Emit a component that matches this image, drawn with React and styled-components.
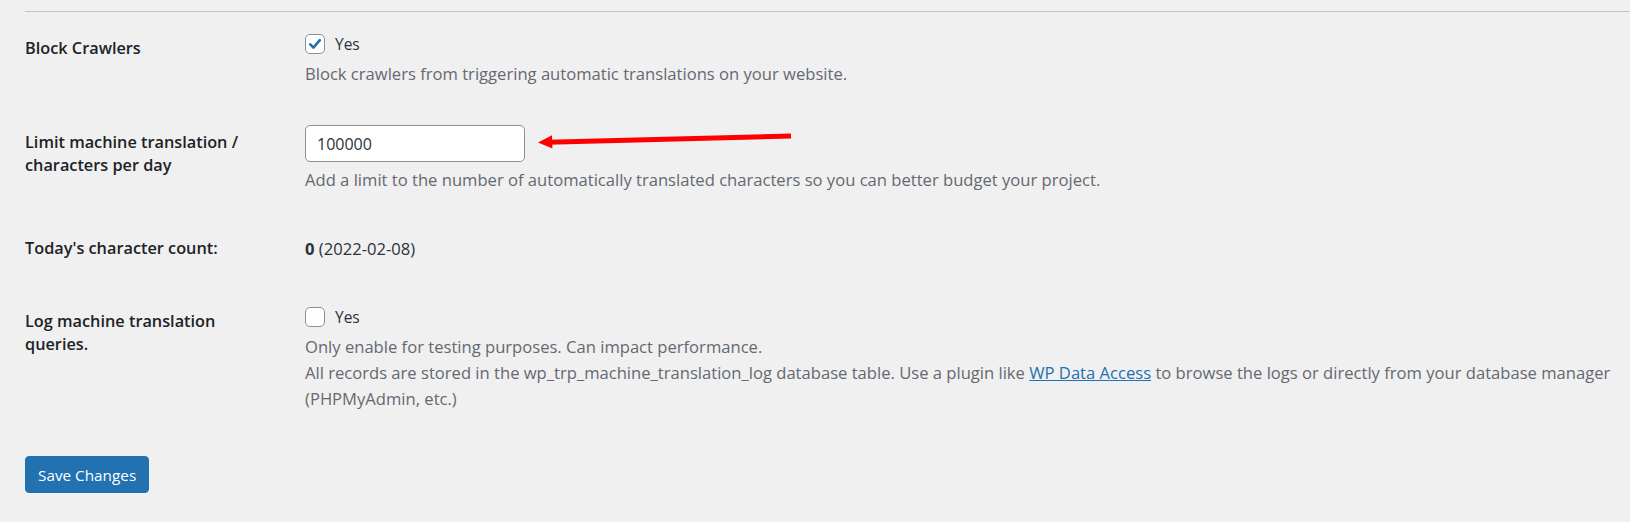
import React from 'react'
import styled, { createGlobalStyle } from 'styled-components'

const GlobalStyle = createGlobalStyle`
  html, body {
    margin: 0;
    padding: 0;
    background: #f0f0f1;
  }
  body {
    font-family: 'Open Sans', 'Noto Sans', 'Liberation Sans', sans-serif;
    color: #1d2327;
  }
`

const Page = styled.div`
  position: relative;
  padding: 11px 0 0 25px;
  min-height: 522px;
  box-sizing: border-box;
`

const Divider = styled.hr`
  margin: 0;
  border: 0;
  border-top: 1px solid #c3c4c7;
`

const FormTable = styled.div`
  display: grid;
  grid-template-columns: 280px 1fr;
`

const Label = styled.div`
  padding: 25px 12px 25px 0;
  font-size: 16.3px;
  font-weight: 600;
  line-height: 23px;
  color: #1d2327;
`

const Field = styled.div`
  padding: ${props => (props.plain ? '25px' : '19px')} 12px 19px 0;
  font-size: 16.6px;
  line-height: 23px;
  color: #2c3338;
`

const CheckLine = styled.label`
  display: flex;
  align-items: center;
  gap: 10px;
  height: 26px;
  font-size: 15.5px;
`

const Box = styled.span`
  display: inline-flex;
  align-items: center;
  justify-content: center;
  width: 20px;
  height: 20px;
  box-sizing: border-box;
  border: 1px solid #8c8f94;
  border-radius: 5px;
  background: #fff;
`

const Description = styled.p`
  margin: ${props => props.gap || 4}px 0 0;
  font-size: 16.6px;
  line-height: 26px;
  color: #646970;
`

const Input = styled.input`
  display: block;
  width: 220px;
  height: 37px;
  box-sizing: border-box;
  padding: 0 11px;
  border: 1px solid #8c8f94;
  border-radius: 5px;
  background: #fff;
  font-family: inherit;
  font-size: 16px;
  color: #2c3338;
  outline: none;
`

const Link = styled.a`
  color: #2271b1;
  text-decoration: underline;
`

const Submit = styled.p`
  margin: 25px 0 0;
`

const Button = styled.button`
  height: 37px;
  padding: 0 12px;
  border: 1px solid #2271b1;
  border-radius: 4px;
  background: #2271b1;
  color: #fff;
  font-family: inherit;
  font-size: 15.3px;
  cursor: pointer;
`

const Arrow = styled.svg`
  position: absolute;
  left: 530px;
  top: 125px;
  overflow: visible;
`

function Checkbox({ checked }) {
  return (
    <Box>
      {checked && (
        <svg width="16" height="16" viewBox="0 0 16 16">
          <path d="M3.2 8.4 L6.4 11.6 L12.8 4.2" fill="none" stroke="#2271b1" strokeWidth="2.6" strokeLinecap="round" strokeLinejoin="round" />
        </svg>
      )}
    </Box>
  )
}

export default function App() {
  return (
    <>
      <GlobalStyle />
      <Page>
        <Divider />
        <FormTable>
          <Label>Block Crawlers</Label>
          <Field>
            <CheckLine>
              <Checkbox checked />
              Yes
            </CheckLine>
            <Description>Block crawlers from triggering automatic translations on your website.</Description>
          </Field>

          <Label>
            Limit machine translation /<br />
            characters per day
          </Label>
          <Field>
            <Input defaultValue="100000" />
            <Description gap={5}>
              Add a limit to the number of automatically translated characters so you can better budget your project.
            </Description>
          </Field>

          <Label>Today's character count:</Label>
          <Field plain>
            <strong>0</strong> (2022-02-08)
          </Field>

          <Label>
            Log machine translation
            <br />
            queries.
          </Label>
          <Field>
            <CheckLine>
              <Checkbox />
              Yes
            </CheckLine>
            <Description>
              Only enable for testing purposes. Can impact performance.
              <br />
              All records are stored in the wp_trp_machine_translation_log database table. Use a plugin like{' '}
              <Link href="#">WP Data Access</Link> to browse the logs or directly from your database manager
              <br />
              (PHPMyAdmin, etc.)
            </Description>
          </Field>
        </FormTable>
        <Submit>
          <Button>Save Changes</Button>
        </Submit>

        {/* red pointer toward the daily limit input */}
        <Arrow width="265" height="26" viewBox="0 0 265 26">
          <line x1="18" y1="17.2" x2="261" y2="11" stroke="#ff0000" strokeWidth="5" />
          <polygon points="8,17.5 22,10.3 22.4,23.6" fill="#ff0000" />
        </Arrow>
      </Page>
    </>
  )
}
